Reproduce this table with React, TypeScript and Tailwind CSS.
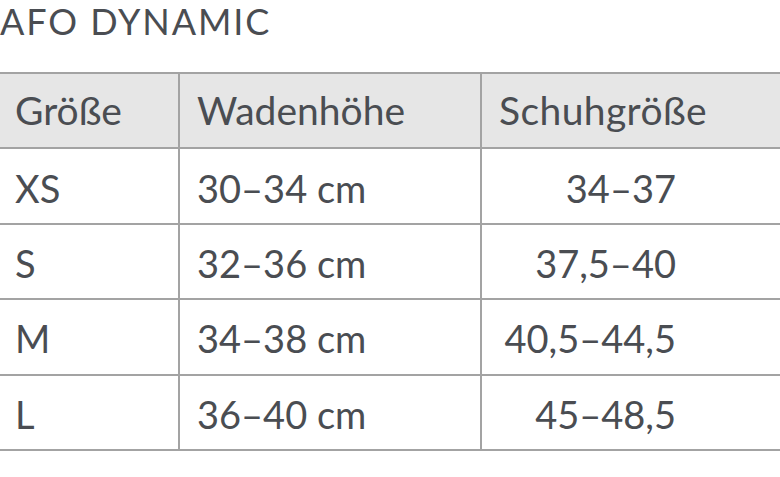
const rows = [
  { size: 'XS', calf: '30–34 cm', shoe: '34–37' },
  { size: 'S', calf: '32–36 cm', shoe: '37,5–40' },
  { size: 'M', calf: '34–38 cm', shoe: '40,5–44,5' },
  { size: 'L', calf: '36–40 cm', shoe: '45–48,5' },
];

const cols = 'grid grid-cols-[180px_302px_1fr] h-[75.4px] border-b-2 border-[#a3a3a3]';

export default function App() {
  return (
    <div className="w-[780px] h-[477px] overflow-hidden bg-white text-[#4a4d52] font-['Lato','Open_Sans',sans-serif]">
      <h1 className="h-[73px] -mt-[1px] text-[36px] leading-[44px] tracking-[1.9px]">AFO DYNAMIC</h1>
      <div className="w-[820px] border-t-2 border-[#a3a3a3]">
        <div className={`${cols} bg-[#e6e6e6] text-[39px]`}>
          <div className="flex items-center pl-[15px] border-r-2 border-[#a3a3a3]">Größe</div>
          <div className="flex items-center pl-[17px] border-r-2 border-[#a3a3a3]">Wadenhöhe</div>
          <div className="flex items-center pl-[17px] tracking-[0.4px]">Schuhgröße</div>
        </div>
        {rows.map((r) => (
          <div key={r.size} className={`${cols} text-[38px]`}>
            <div className="flex items-center pl-[15px] pt-[4px] border-r-2 border-[#a3a3a3]">{r.size}</div>
            <div className="flex items-center pl-[17px] pt-[4px] border-r-2 border-[#a3a3a3]">{r.calf}</div>
            <div className="flex items-center pt-[4px]">
              <span className="w-[194px] text-right">{r.shoe}</span>
            </div>
          </div>
        ))}
      </div>
    </div>
  );
}
